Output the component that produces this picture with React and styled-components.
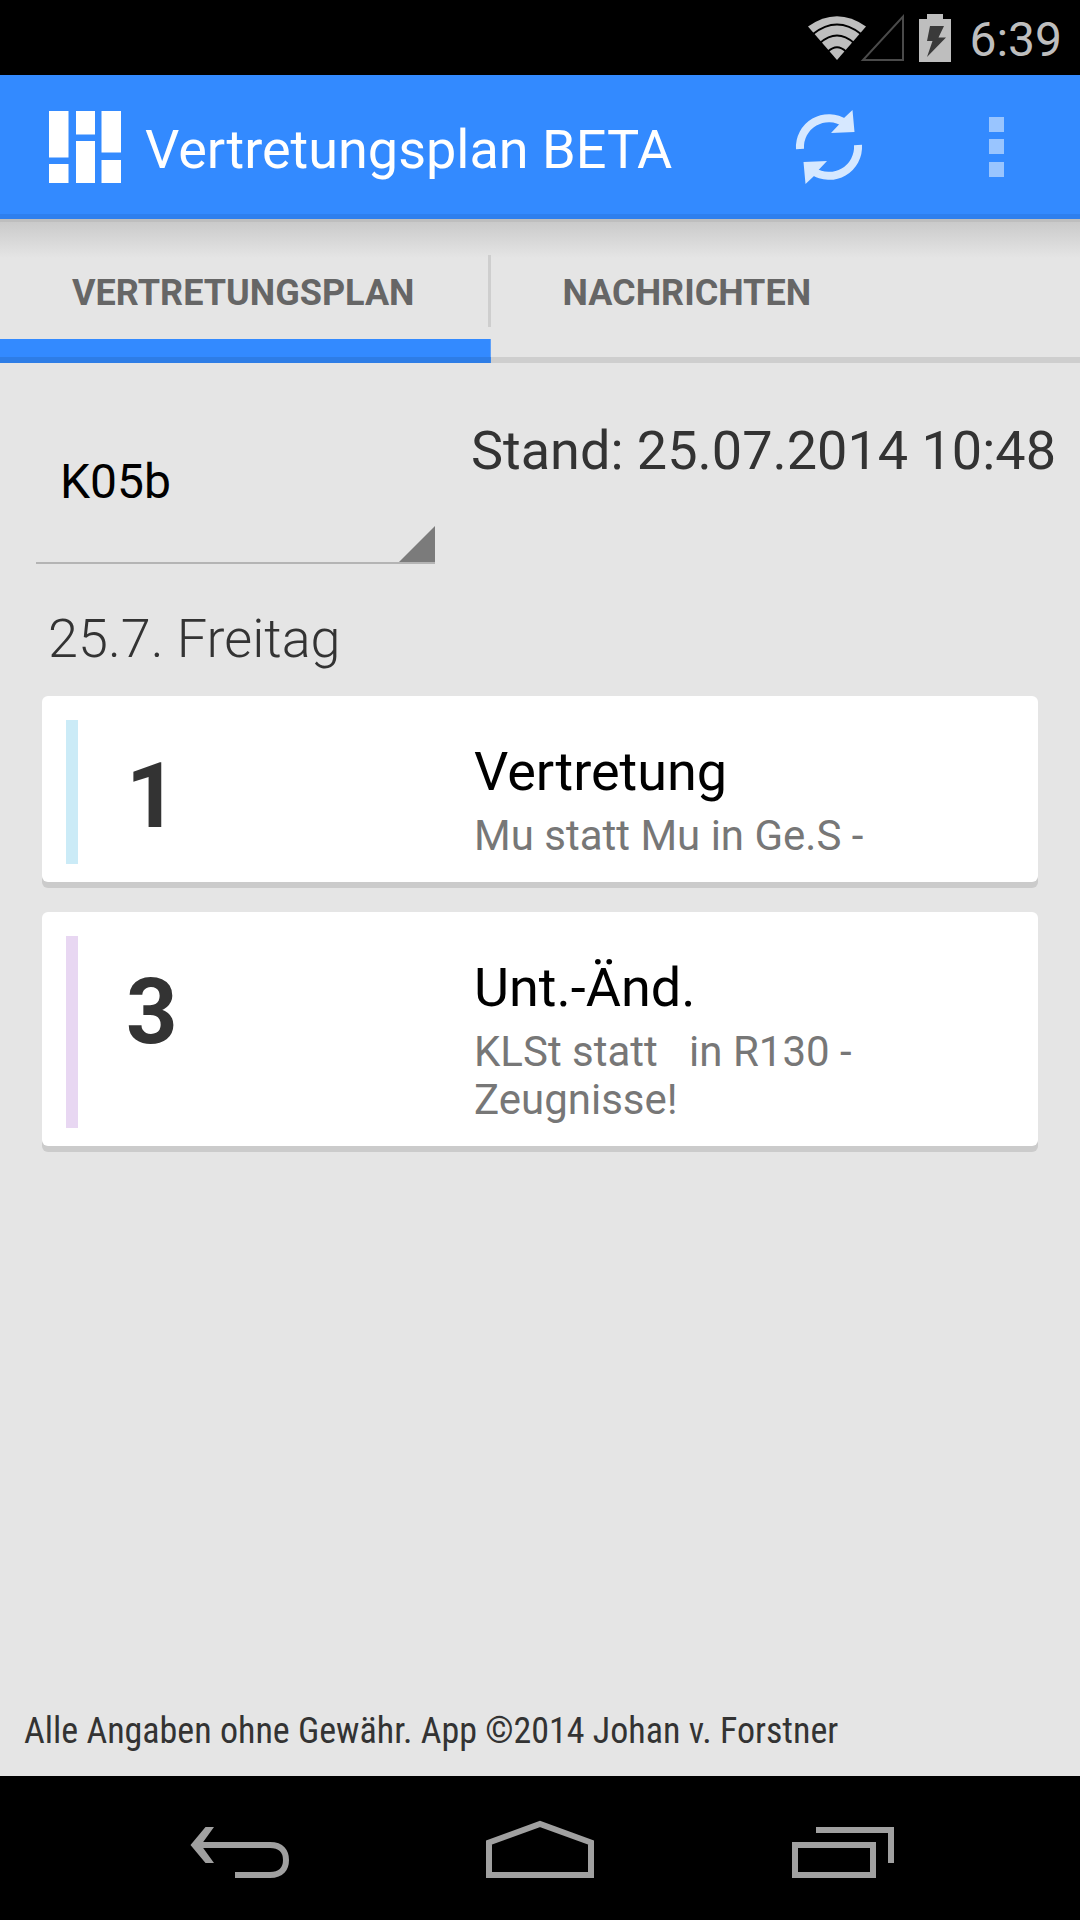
import React, { useState } from "react";
import styled, { createGlobalStyle } from "styled-components";

const GlobalStyle = createGlobalStyle`
  * { box-sizing: border-box; }
  body { margin: 0; background: #e5e5e5; font-family: Roboto, "Noto Sans", sans-serif; }
  button, select { font-family: inherit; border: 0; padding: 0; background: none; border-radius: 0; }
  svg { display: block; }
`;

const Screen = styled.div`
  display: flex;
  flex-direction: column;
  min-height: 100vh;
  color: #333;
`;

const StatusBar = styled.div`
  display: flex;
  justify-content: flex-end;
  align-items: center;
  height: 75px;
  padding-right: 18px;
  background: #000;
  color: #bebebe;
`;

const StatusIcons = styled.div`
  display: flex;
  margin-right: 16px;
`;

const Clock = styled.time`
  padding-top: 4px;
  font-size: 48px;
  line-height: 56px;
`;

const ActionBar = styled.header`
  display: flex;
  align-items: center;
  height: 144px;
  padding-left: 48px;
  background: linear-gradient(#338aff, #338aff) no-repeat, #2e7fee;
  background-size: 100% 139px;
  color: #fff;
`;

const AppTitle = styled.h1`
  flex: 1;
  margin: 0;
  padding: 6px 0 0 24px;
  font-size: 54px;
  font-weight: 400;
  line-height: 64px;
  white-space: nowrap;
`;

const ActionButton = styled.button`
  display: flex;
  justify-content: center;
  align-items: center;
  width: 168px;
  height: 144px;
  cursor: pointer;
`;

const Tabs = styled.nav`
  display: flex;
  height: 144px;
  border-top: 3px solid #bebebe;
  background:
    linear-gradient(#cecece, #cecece) no-repeat bottom / 100% 6px,
    linear-gradient(#cacaca, #e5e5e5) no-repeat top / 100% 36px;
`;

const Tab = styled.button`
  padding: 0 76px 0 72px;
  color: #666;
  font-size: 36px;
  font-weight: 700;
  line-height: 42px;
  cursor: pointer;
  background:
    ${(p) =>
      p.$active
        ? `linear-gradient(#2e7de6, #2e7de6) no-repeat bottom / 100% 6px,
           linear-gradient(#338aff, #338aff) no-repeat bottom / 100% 24px,`
        : ""}
    linear-gradient(#cecece, #cecece) no-repeat right 33px / ${(p) => (p.$divider ? 3 : 0)}px 72px;
`;

const Main = styled.main`
  flex: 1;
  padding: 56px 36px 0;
`;

const Filter = styled.div`
  display: flex;
  justify-content: space-between;
  gap: 36px;
  margin-right: -12px;
`;

const ClassSelect = styled.select`
  flex: 1;
  max-width: 400px;
  height: 145px;
  padding: 0 48px 18px 24px;
  appearance: none;
  border-bottom: 2px solid #b4b4b4;
  outline: none;
  background: linear-gradient(135deg, transparent 49%, #7b7b7b 51%) no-repeat right bottom / 36px 36px;
  color: #000;
  font-size: 48px;
`;

const Updated = styled.p`
  margin: 0;
  font-size: 54px;
  line-height: 64px;
  white-space: nowrap;
`;

const Day = styled.h2`
  margin: 0;
  padding: 42px 12px 24px;
  font-size: 54px;
  font-weight: 300;
  line-height: 66px;
`;

const CardList = styled.div`
  display: flex;
  flex-direction: column;
  gap: 30px;
  padding: 0 6px;
`;

const Card = styled.article`
  display: grid;
  grid-template-columns: 12px 11fr 15fr;
  padding: 24px 24px 18px;
  border-radius: 6px;
  background: #fff;
  box-shadow: 0 6px 0 #cbcbcb;
`;

const Stripe = styled.div`
  background: ${(p) => p.$color};
`;

const Lesson = styled.div`
  padding: 24px 0 0 48px;
  font-size: 90px;
  font-weight: 700;
  line-height: 106px;
`;

const Details = styled.div`
  padding: 14px 0 4px;
`;

const Kind = styled.h3`
  margin: 0 0 2px;
  color: #000;
  font-size: 54px;
  font-weight: 400;
  line-height: 76px;
`;

const Note = styled.p`
  margin: 0;
  color: #777;
  font-size: 42px;
  line-height: 48px;
  white-space: pre-wrap;
`;

const Footer = styled.footer`
  padding: 0 24px 24px;
  font-family: "Roboto Condensed", Roboto, sans-serif;
  font-size: 36px;
  line-height: 42px;
`;

const NavBar = styled.nav`
  display: flex;
  height: 144px;
  padding: 0 90px;
  background: #000;
`;

const NavButton = styled.button`
  display: flex;
  flex: 1;
  justify-content: center;
  align-items: center;
  cursor: pointer;
`;

const Wifi = () => (
  <svg width="58" height="48" viewBox="0 0 58 48" fill="none" aria-hidden="true">
    <path d="M29 46 L0 12.500 Q29 -8 58 12.500 Z" fill="#bebebe" />
    <path d="M5 20 Q29 1 53 20" stroke="#000" strokeWidth="2" />
    <path d="M12 29 Q29 14 46 29" stroke="#000" strokeWidth="2" />
    <path d="M20 37.500 Q29 29 38 37.500" stroke="#000" strokeWidth="2" />
  </svg>
);

const Signal = () => (
  <svg width="44" height="48" viewBox="0 0 44 48" fill="none" overflow="visible" aria-hidden="true">
    <path d="M-3 46 H37 V2.500 Z" stroke="#4a4a4a" strokeWidth="2" />
  </svg>
);

const Battery = () => (
  <svg width="43" height="48" viewBox="0 0 43 48" aria-hidden="true">
    <path d="M17 0 H33 V5 H41 V48 H9 V5 H17 Z" fill="#bebebe" />
    <path d="M20 12 H34 L28.500 23.500 H36 L17 43 L22.500 27 H17 Z" fill="#3a3a3a" />
  </svg>
);

const Logo = () => (
  <svg width="73" height="72" viewBox="0 0 73 72" fill="#fff" aria-hidden="true">
    <path d="M1 0h19.500v46.500H1zM1 53h19.500v19H1zM28 0h19v23.500H28zM28 30h19v42H28zM53.500 0H73v41.500H53.500zM53.500 49H73v23H53.500z" />
  </svg>
);

const Refresh = () => (
  <svg width="72" height="74" viewBox="-37 -37 72 74" fill="none" aria-hidden="true">
    <g id="arrow">
      <path d="M-29 2 A29 29 0 0 1 16 -24" stroke="#d6e8ff" strokeWidth="8" />
      <path d="M23.500 -37 L25.500 -15 L2 -14 L10.500 -23 L15 -29 Z" fill="#d6e8ff" />
    </g>
    <use href="#arrow" transform="rotate(180)" />
  </svg>
);

const Overflow = () => (
  <svg width="15" height="60" viewBox="0 0 15 60" fill="#99c5ff" aria-hidden="true">
    <path d="M0 0h15v15H0zM0 22h15v15H0zM0 45h15v15H0z" />
  </svg>
);

const Back = () => (
  <svg width="120" height="72" viewBox="0 0 120 72" fill="none" stroke="#a0a0a0" strokeWidth="6" aria-hidden="true">
    <path d="M18 33 H90 C102 33 106 40 106 48 C106 56 102 63 90 63 H55" />
    <path d="M25.500 15 H34 L21 33 L34 51 H25.500 L10.500 33 Z" fill="#a0a0a0" stroke="none" />
  </svg>
);

const Home = () => (
  <svg width="120" height="72" viewBox="0 0 120 72" fill="none" stroke="#a0a0a0" strokeWidth="6" aria-hidden="true">
    <path d="M9 63 V30.500 L60 12 L111 30.500 V63 Z" />
  </svg>
);

const Recents = () => (
  <svg width="120" height="72" viewBox="0 0 120 72" fill="none" stroke="#a0a0a0" strokeWidth="6" aria-hidden="true">
    <path d="M15 33 H93 V63 H15 Z M36 18 H111 V51" />
  </svg>
);

const tabs = ["VERTRETUNGSPLAN", "NACHRICHTEN"];

const entries = [
  { lesson: "1", color: "#cbebf7", kind: "Vertretung", note: "Mu statt Mu in Ge.S -" },
  { lesson: "3", color: "#e8d7f2", kind: "Unt.-Änd.", note: "KLSt statt   in R130 - Zeugnisse!" },
];

export default function App() {
  const [active, setActive] = useState(0);
  return (
    <Screen>
      <GlobalStyle />
      <StatusBar>
        <StatusIcons>
          <Wifi />
          <Signal />
          <Battery />
        </StatusIcons>
        <Clock>6:39</Clock>
      </StatusBar>
      <ActionBar>
        <Logo />
        <AppTitle>Vertretungsplan BETA</AppTitle>
        <ActionButton type="button" aria-label="Aktualisieren">
          <Refresh />
        </ActionButton>
        <ActionButton type="button" aria-label="Weitere Optionen">
          <Overflow />
        </ActionButton>
      </ActionBar>
      <Tabs role="tablist">
        {tabs.map((name, i) => (
          <Tab
            key={name}
            type="button"
            role="tab"
            aria-selected={active === i}
            $active={active === i}
            $divider={i < tabs.length - 1}
            onClick={() => setActive(i)}
          >
            {name}
          </Tab>
        ))}
      </Tabs>
      <Main>
        <Filter>
          <ClassSelect aria-label="Klasse" defaultValue="K05b">
            <option>K05b</option>
          </ClassSelect>
          <Updated>Stand: 25.07.2014 10:48</Updated>
        </Filter>
        <Day>25.7. Freitag</Day>
        <CardList>
          {entries.map((e) => (
            <Card key={e.lesson}>
              <Stripe $color={e.color} />
              <Lesson>{e.lesson}</Lesson>
              <Details>
                <Kind>{e.kind}</Kind>
                <Note>{e.note}</Note>
              </Details>
            </Card>
          ))}
        </CardList>
      </Main>
      <Footer>Alle Angaben ohne Gewähr. App ©2014 Johan v. Forstner</Footer>
      <NavBar aria-label="System">
        <NavButton type="button" aria-label="Zurück">
          <Back />
        </NavButton>
        <NavButton type="button" aria-label="Startseite">
          <Home />
        </NavButton>
        <NavButton type="button" aria-label="Letzte Apps">
          <Recents />
        </NavButton>
      </NavBar>
    </Screen>
  );
}
